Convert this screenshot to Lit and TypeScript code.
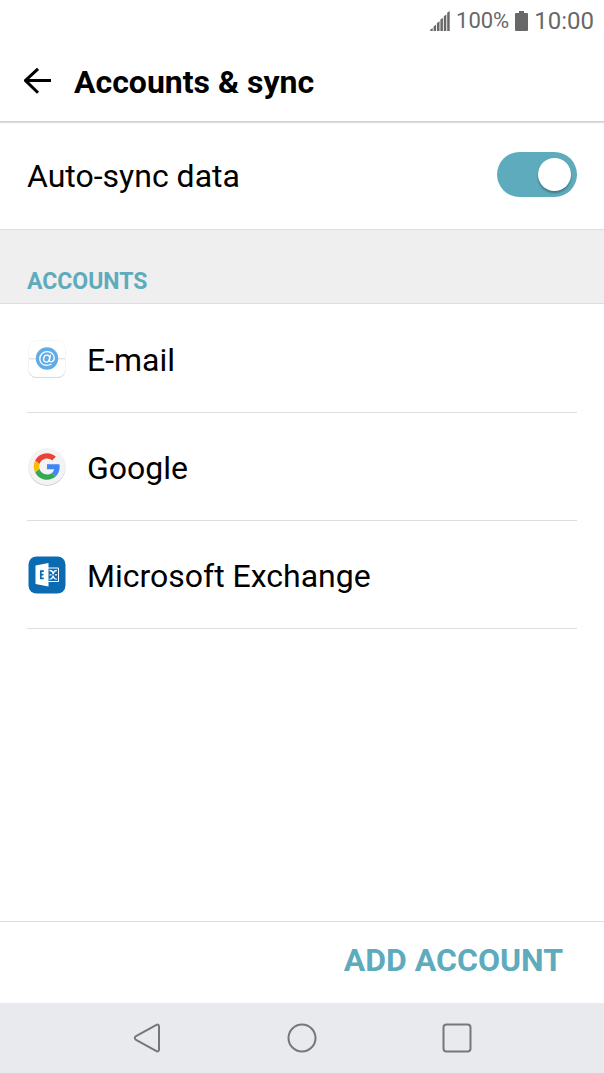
import { LitElement, html, css, svg } from "lit";
import { customElement, state } from "lit/decorators.js";

const signalIcon = html`<svg width="20" height="21" viewBox="0 0 20 21" aria-hidden="true">
  ${[0, 1, 2, 3, 4, 5].map((i) => {
    const x = 0.2 + i * 3.4;
    const top = 17.8 - i * 3.4;
    return svg`<path d="M${x} 20V${top + 1}L${x + 2.5} ${top - 0.8}V20z" />`;
  })}
</svg>`;

const batteryIcon = html`<svg width="13" height="21" viewBox="0 0 13 21" aria-hidden="true">
  <path d="M4 0h5v2h3a1 1 0 0 1 1 1v16a1 1 0 0 1-1 1H1a1 1 0 0 1-1-1V3a1 1 0 0 1 1-1h3z" />
</svg>`;

const emailIcon = html`<svg width="38" height="38" viewBox="0 0 38 38" aria-hidden="true">
  <rect x="0.5" y="2" width="37" height="36" rx="8" fill="#cdcdcd" />
  <rect x="0.5" y="0.5" width="37" height="36.5" rx="8" fill="#fff" stroke="#f4f4f4" stroke-width="0.8" />
  <path d="M1 18.7h36" stroke="#e4e4e4" stroke-width="1.4" />
  <circle cx="19" cy="18.5" r="11.2" fill="#62ace6" />
  <g fill="none" stroke="#fff" stroke-width="1.3" stroke-linecap="round">
    <ellipse cx="18.6" cy="18.6" rx="2.9" ry="3.5" transform="rotate(15 18.6 18.6)" />
    <path d="M22.3 15.2l-.9 5.1c-.3 2.300 4.800 2.200 4.800-2.400 0-3.700-3-6.200-6.900-6.200-4.400 0-7.500 3-7.500 7 0 4 3 6.600 7 6.600 1.700 0 3-.3 4.200-1" />
  </g>
</svg>`;

const googleIcon = html`<svg width="38" height="38" viewBox="0 0 38 38" aria-hidden="true">
  <circle cx="19" cy="19.400" r="18.500" fill="#d2d2d2" />
  <circle cx="19" cy="18.500" r="18.400" fill="#f3f3f3" />
  <g transform="translate(5.800 5.300) scale(.55)">
    <path fill="#4285f4" d="M46.980 24.550c0-1.570-.150-3.090-.380-4.550H24v9.020h12.940c-.580 2.960-2.260 5.480-4.780 7.180l7.730 6c4.510-4.180 7.090-10.360 7.090-17.650z" />
    <path fill="#fbbc05" d="M10.530 28.590c-.480-1.450-.760-2.990-.760-4.590s.270-3.140.760-4.590l-7.980-6.190C.920 16.460 0 20.120 0 24s.920 7.540 2.560 10.780z" />
    <path fill="#34a853" d="M24 48c6.480 0 11.930-2.130 15.890-5.810l-7.730-6c-2.150 1.450-4.920 2.300-8.160 2.300-6.260 0-11.570-4.220-13.470-9.910l-7.980 6.190C6.510 42.620 14.620 48 24 48z" />
    <path fill="#ea4335" d="M24 9.500c3.540 0 6.710 1.220 9.210 3.600l6.850-6.850C35.900 2.380 30.470 0 24 0 14.620 0 6.510 5.380 2.560 13.220l7.980 6.190C12.430 13.720 17.740 9.500 24 9.500z" />
  </g>
</svg>`;

const exchangeIcon = html`<svg width="38" height="38" viewBox="0 0 38 38" aria-hidden="true">
  <rect x="0.500" y="0.500" width="37" height="37" rx="8" fill="#0a6ab2" />
  <path d="M20 12h10.500v13.500H20" fill="none" stroke="#fff" stroke-width="1" />
  <path d="M21.500 14.500q3.200-.2 3.700 3.800M28.800 14.500q-3.200 0-3.400 3.300M28.800 23.200q-3.200 0-3.600-3.700M21.500 23.200q3.200 0 3.600-3.700M21.500 18.800h2M27 18.800h2" fill="none" stroke="#fff" stroke-width="1.300" />
  <path d="M7.500 9.500L20.500 7v23.500L7.500 28z" fill="#fff" />
  <path d="M15.800 15.200h-3v7.100h3M12.800 18.700h2.700" fill="none" stroke="#0a6ab2" stroke-width="1.700" />
</svg>`;

@customElement("app-root")
export class AppRoot extends LitElement {
  @state() private autoSync = true;

  private accounts = [
    { name: "E-mail", icon: emailIcon },
    { name: "Google", icon: googleIcon },
    { name: "Microsoft Exchange", icon: exchangeIcon },
  ];

  static styles = css`
    :host {
      --accent: #5dabbc;
      --line: #dedede;
      display: flex;
      flex-direction: column;
      min-height: 100vh;
      background: #fff;
      color: #000;
      font-family: Roboto, sans-serif;
      font-size: 32px;
      line-height: 40px;
    }
    *,
    *::before {
      box-sizing: border-box;
    }
    svg {
      display: block;
      flex: none;
    }
    button {
      border: 0;
      padding: 0;
      background: none;
      color: inherit;
      font: inherit;
      cursor: pointer;
    }
    .status {
      display: flex;
      justify-content: flex-end;
      align-items: center;
      gap: 6px;
      height: 42px;
      padding-right: 10px;
      color: #686868;
      fill: #686868;
      font-size: 24px;
    }
    .charge {
      font-size: 22px;
    }
    .header {
      display: flex;
      align-items: center;
      gap: 22px;
      height: 80px;
      padding: 0 24px;
      border-bottom: 1px solid #cfcfcf;
      box-shadow: 0 1px 1px rgba(0, 0, 0, 0.12);
    }
    h1 {
      margin: 0;
      padding-top: 1px;
      font-size: 32px;
      font-weight: 700;
    }
    .sync {
      display: flex;
      align-items: center;
      justify-content: space-between;
      height: 107px;
      padding: 0 27px;
    }
    .switch {
      appearance: none;
      display: flex;
      align-items: center;
      width: 80px;
      height: 45px;
      margin: 0 0 2px;
      padding: 0 6px;
      border-radius: 23px;
      background: #b5b5b5;
      cursor: pointer;
    }
    .switch::before {
      content: "";
      width: 33px;
      height: 33px;
      border-radius: 50%;
      background: #fff;
      box-shadow: 0 2px 2px rgba(0, 0, 0, 0.3);
    }
    .switch:checked {
      justify-content: flex-end;
      background: var(--accent);
    }
    h2 {
      display: flex;
      align-items: flex-end;
      height: 75px;
      margin: 0;
      padding: 0 27px 5px;
      border: solid var(--line);
      border-width: 1px 0;
      background: #efefef;
      color: var(--accent);
      font-size: 23px;
      font-weight: 700;
      line-height: 32px;
    }
    .accounts {
      flex: 1;
      margin: 0;
      padding: 1px 27px 0;
      list-style: none;
    }
    .account {
      display: flex;
      align-items: center;
      gap: 21px;
      width: 100%;
      min-height: 108px;
      padding: 1px 0 0 1px;
      border-bottom: 1px solid var(--line);
      text-align: left;
    }
    .name {
      padding-top: 2px;
    }
    .footer {
      display: flex;
      justify-content: flex-end;
      height: 82px;
      padding: 0 41px;
      border-top: 1px solid var(--line);
    }
    .add {
      padding-bottom: 5px;
      color: var(--accent);
      font-weight: 700;
    }
    .nav {
      display: flex;
      justify-content: center;
      gap: 125px;
      height: 70px;
      background: #e9eaee;
    }
    .nav svg {
      fill: none;
      stroke: #777;
      stroke-width: 2;
      stroke-linejoin: round;
    }
  `;

  private toggle(e: Event) {
    this.autoSync = (e.target as HTMLInputElement).checked;
  }

  render() {
    return html`
      <div class="status">
        ${signalIcon}<span class="charge">100%</span>${batteryIcon}<span>10:00</span>
      </div>
      <header class="header">
        <button aria-label="Back">
          <svg width="28" height="28" viewBox="0 0 28 28" fill="none" stroke="#000" stroke-width="3" aria-hidden="true">
            <path d="M14 .8L1.500 12.500 14 24.700M1.500 12.500H27" />
          </svg>
        </button>
        <h1>Accounts &amp; sync</h1>
      </header>
      <label class="sync">
        <span>Auto-sync data</span>
        <input class="switch" type="checkbox" role="switch" .checked=${this.autoSync} @change=${this.toggle} />
      </label>
      <h2>ACCOUNTS</h2>
      <ul class="accounts">
        ${this.accounts.map(
          (a) => html`<li><button class="account">${a.icon}<span class="name">${a.name}</span></button></li>`
        )}
      </ul>
      <footer class="footer"><button class="add">ADD ACCOUNT</button></footer>
      <nav class="nav">
        <button aria-label="Back">
          <svg width="30" height="30" viewBox="0 0 30 30">
            <path d="M24.500 1.800L4 13.200a2 2 0 0 0 0 3.600L24.500 28.200a1.700 1.700 0 0 0 2.500-1.600V3.400a1.700 1.700 0 0 0-2.500-1.600z" />
          </svg>
        </button>
        <button aria-label="Home">
          <svg width="30" height="30" viewBox="0 0 30 30"><circle cx="15" cy="15" r="13.500" /></svg>
        </button>
        <button aria-label="Recent apps">
          <svg width="30" height="30" viewBox="0 0 30 30"><rect x="1.500" y="1.500" width="27" height="27" rx="3" /></svg>
        </button>
      </nav>
    `;
  }
}
